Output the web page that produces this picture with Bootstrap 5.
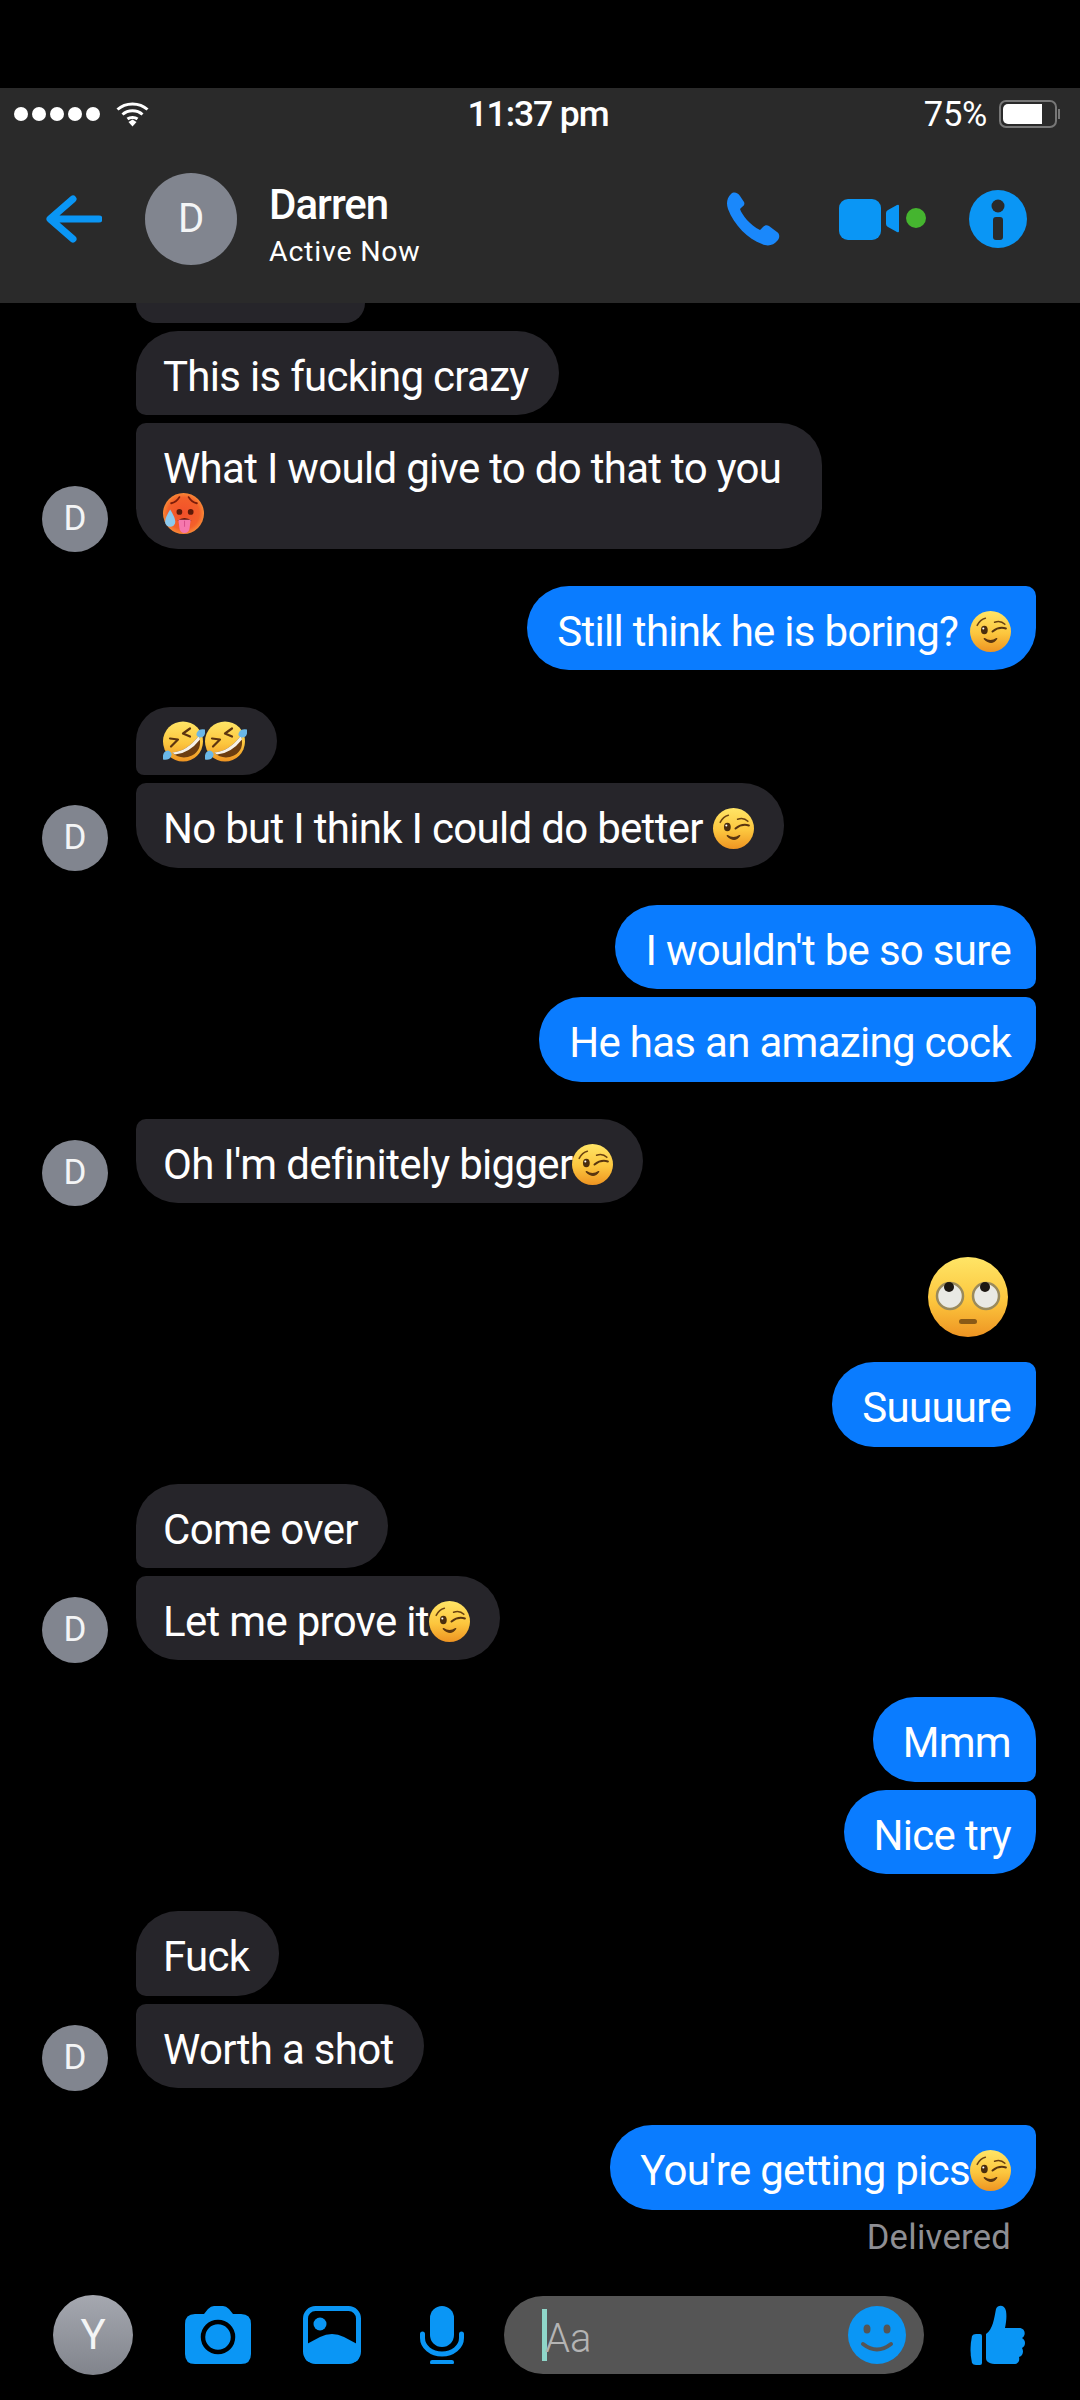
<!doctype html>
<html lang="en"><head><meta charset="utf-8"><title>Darren</title>
<link href="https://cdn.jsdelivr.net/npm/bootstrap@5.3.0/dist/css/bootstrap.min.css" rel="stylesheet">
<style>
html,body{background:#000;margin:0}
.screen{width:1080px;height:2400px;background:#000;color:#fff;font-family:Roboto,"Liberation Sans",sans-serif;overflow:hidden}
.topgap{height:88px}
.appbar{height:215px;background:#2a2a2a;flex:none}
.statusline{height:52px;padding:0 20px 0 14px;font-size:35px;line-height:52px}
.stat-l,.stat-r{width:360px}
.sig{width:14px;height:14px;background:#fff;border-radius:50%}
.sigs{gap:4px}
.clock{font-weight:500;font-size:35.5px;letter-spacing:-1.100px;margin-left:2px}
.pct{font-size:34.5px;letter-spacing:-.3px}
.batt{width:61px;height:28px;margin-left:12px}
.navline{height:157px;padding-left:46px}
.ava{background:#81858f;color:#f4f5f6;flex:none}
.ava-lg{width:92px;height:92px;font-size:40px;margin-left:43px}
.who{margin-left:32px;padding-top:14px}
.who-name{font-size:42px;font-weight:500;line-height:46px;letter-spacing:-1px}
.who-state{font-size:28.5px;line-height:36px;letter-spacing:.8px;margin-top:6px}
.acts{margin-left:auto}
.feed{min-height:0;overflow:hidden}
.stub{width:229px;height:20px;margin-left:136px;background:#26252a;border-radius:0 0 42px 42px;margin-bottom:8px}
.grp{margin-top:37.1px}
.grp-in{padding-left:136px;position:relative}
.grp-out{padding-right:44px}
.stack{gap:8px}
.bub{font-size:42px;line-height:41px;padding:25px 30px 18.4px 27px;border-radius:42px;width:fit-content;max-width:700px;letter-spacing:-.7px}
.bub-in{background:#26252a}
.bub-out{background:#0a7cff;padding:25px 25px 18.4px 30px}
.bub-in.top{border-bottom-left-radius:10px}
.bub-in.end{border-top-left-radius:10px}
.bub-out.top{border-bottom-right-radius:10px}
.bub-out.end{border-top-right-radius:10px}
.bub-wrapped{padding-right:41px}
.bub-emo{padding-top:13.5px;padding-bottom:13.5px}
.grp-first{margin-top:0}
.ava-sm{width:66px;height:66px;font-size:35px;position:absolute;left:42px;bottom:-3px}
.emo{width:41px;height:41px;vertical-align:0;margin:-6px 0}
.emo-wide{width:42px}
.emo-low{vertical-align:-4px}
.word-gap{margin-left:2px}
.emo-big{width:80px;height:80px;display:block;margin:0 28px 25px auto}
.rolled{margin-top:54px}
.status-note{font-size:34.5px;line-height:40px;color:#8e8e93;padding-right:25px;margin-top:7px;letter-spacing:.3px}
.composer{height:107px;flex:none;padding-left:53px;padding-bottom:24px}
.ava-me{width:80px;height:80px;font-size:42px;background:linear-gradient(#a5a8b0,#81848c)}
.ic-cam{margin-left:52px}.ic-gal{margin-left:52px}.ic-mic{margin-left:59px}
.entry{width:420px;height:78px;background:#555;margin-left:40px;padding:0 18px 0 38px}
.caret-bar{width:5px;height:52px;background:#8fd6c9;margin-right:-2px}
.hint{font-size:40px;color:#b4b4b4;font-weight:300;padding-top:9px}
.ic-smile{margin-left:auto}
.ic-like{margin-left:45px}
.ic-video{margin-left:59px}
.ic-info{margin:0 53px 0 43px}
svg{display:block;flex:none}
svg.emo{display:inline-block}
.defs{width:0;height:0;display:block}
</style></head><body>
<svg class="defs" aria-hidden="true"><defs>
<linearGradient id="y" x1="0" y1="0" x2="0" y2="1"><stop offset="0" stop-color="#ffe566"/><stop offset=".55" stop-color="#fcc63e"/><stop offset="1" stop-color="#ee9422"/></linearGradient>
<radialGradient id="h" cx=".5" cy=".5" r=".55"><stop offset="0" stop-color="#f2502a"/><stop offset=".7" stop-color="#f3602a"/><stop offset="1" stop-color="#fb9a3c"/></radialGradient>
<symbol id="wink" viewBox="0 0 40 40"><circle cx="20" cy="20" r="20" fill="url(#y)"/><path d="M7 14q3-6 8-7M24 11q6-2 10 2" fill="none" stroke="#6b4210" stroke-width="1.500" stroke-linecap="round"/><ellipse cx="14" cy="18.500" rx="3.300" ry="4.200" fill="#4a2e0e"/><circle cx="13" cy="17" r="1" fill="#fff"/><path d="M22 20q6-5 13-3" fill="none" stroke="#5a3610" stroke-width="2" stroke-linecap="round"/><path d="M14 27q6 4 12 0q-5 7-12 0z" fill="#5a3610" stroke="#5a3610" stroke-width="1.400" stroke-linejoin="round"/></symbol>
<symbol id="hot" viewBox="0 0 40 40"><circle cx="20" cy="20" r="20" fill="url(#h)"/><path d="M8 10q5-1 8-6M25 4q3 5 8 6" fill="none" stroke="#7a1d0a" stroke-width="1.800" stroke-linecap="round"/><circle cx="16" cy="18.500" r="2.800" fill="#5d1a08"/><circle cx="27" cy="18.500" r="2.800" fill="#5d1a08"/><path d="M14 27q7-5 14 0z" fill="#5d1a08"/><path d="M15 26h12l-1 8a5 5 0 0 1-10 0z" fill="#f678ae"/><path d="M21 27v6" stroke="#d94f8c" stroke-width="1"/><path d="M7 16q-5 8-5 12a5 5 0 0 0 10 0q0-4-5-12z" fill="#8cc9ee"/></symbol>
<symbol id="rofl" viewBox="0 0 42 40"><circle cx="20" cy="20" r="20" fill="url(#y)"/><path d="M9 31Q24 30 36 14Q40 28 29 34Q18 39 9 31z" fill="#6b3d10"/><path d="M9 31Q24 30 36 14L37 18Q26 32 12 33z" fill="#f5f1e8"/><path d="M7 17l8 1l-7 7M27 7l-7 5l7 3" fill="none" stroke="#5c3410" stroke-width="2.200" stroke-linecap="round" stroke-linejoin="round"/><path d="M42 8q-6-1-8 3t3 5q6 0 5-8zM0 38q6 1 8-3t-3-6q-6 1-5 9z" fill="#6ab8e8"/></symbol>
<symbol id="roll" viewBox="0 0 80 80"><circle cx="40" cy="40" r="40" fill="url(#y)"/><circle cx="22" cy="39" r="13" fill="#e9e9e4" stroke="#9a8a5c" stroke-width="2.500"/><circle cx="58" cy="39" r="13" fill="#e9e9e4" stroke="#9a8a5c" stroke-width="2.500"/><circle cx="21" cy="30" r="5" fill="#1c1712"/><circle cx="57" cy="30" r="5" fill="#1c1712"/><rect x="31" y="62" width="18" height="5" rx="2.500" fill="#8a5a16"/></symbol>
</defs></svg>
<div class="screen d-flex flex-column">
<div class="topgap"></div>
<header class="appbar">
 <div class="statusline d-flex align-items-center justify-content-between">
  <div class="stat-l d-flex align-items-center"><div class="sigs d-flex"><i class="sig"></i><i class="sig"></i><i class="sig"></i><i class="sig"></i><i class="sig"></i></div>
   <svg class="ms-3" width="33" height="26" viewBox="0 0 33 26" fill="none" stroke="#fff" stroke-width="3"><path d="M1.500 8.500c8-7.500 22-7.500 30 0M6.500 13.500c5.500-5 14.500-5 20 0M11.500 18c2.500-2 7.500-2 10 0"/><path d="M12.500 21l4-2.500l4 2.500l-4 4.500z" fill="#fff" stroke="none"/></svg></div>
  <div class="clock">11:37 pm</div>
  <div class="stat-r d-flex align-items-center justify-content-end"><span class="pct">75%</span>
   <svg class="batt" viewBox="0 0 61 28"><rect x="1" y="1" width="56" height="26" rx="6" fill="none" stroke="#777" stroke-width="2"/><path d="M4 9a5 5 0 0 1 5-5h34v20H9a5 5 0 0 1-5-5z" fill="#fff"/><rect x="59" y="9" width="2" height="10" fill="#777"/></svg></div>
 </div>
 <div class="navline d-flex align-items-center">
  <svg width="56" height="48" viewBox="0 0 56 48" fill="none" stroke="#0a96f5" stroke-width="7" stroke-linecap="round" stroke-linejoin="round"><path d="M53 24H5M27 4L4 24l23 20"/></svg>
  <div class="ava ava-lg rounded-circle d-flex align-items-center justify-content-center">D</div>
  <div class="who"><div class="who-name">Darren</div><div class="who-state">Active Now</div></div>
  <div class="acts d-flex align-items-center">
   <svg width="54" height="54" viewBox="0 0 54 54"><path d="M5 2C8-1 12 1 14 4L18 10C19 12 18 14 16 15L14 17C16 23 24 33 34 38L37 35C39 33 41 33 43 34L51 40C54 42 54 46 51 49C48 53 42 55 36 52C22 47 8 33 2 17C0 11 1 6 5 2Z" fill="#1a88fb"/></svg>
   <svg class="ic-video" width="87" height="42" viewBox="0 0 87 42"><rect y="1" width="42" height="41" rx="9" fill="#0a96f5"/><path d="M47 15q0-2 2-3l9-5q2-1 2 1v25q0 2-2 1l-9-5q-2-1-2-3z" fill="#0a96f5"/><circle cx="77" cy="20" r="10" fill="#45b52f"/></svg>
   <svg class="ic-info" width="58" height="58" viewBox="0 0 58 58"><circle cx="29" cy="29" r="29" fill="#0a96f5"/><circle cx="29" cy="16" r="6.500" fill="#2a2a2a"/><rect x="24" y="27" width="10" height="23" rx="3" fill="#2a2a2a"/></svg>
  </div>
 </div>
</header>
<main class="feed flex-grow-1 d-flex flex-column">
 <div class="stub"></div>
 <section class="grp-in grp-first">
  <div class="stack d-flex flex-column">
   <div class="bub bub-in top">This is fucking crazy</div>
   <div class="bub bub-in end bub-wrapped">What I would give to do that to you<br><svg class="emo emo-low"><use href="#hot"/></svg></div>
  </div><div class="ava ava-sm rounded-circle d-flex align-items-center justify-content-center">D</div>
 </section>
 <section class="grp grp-out d-flex flex-column align-items-end stack"><div class="bub bub-out end">Still think he is boring? <svg class="emo word-gap"><use href="#wink"/></svg></div></section>
 <section class="grp grp-in">
  <div class="stack d-flex flex-column">
   <div class="bub bub-in top bub-emo"><svg class="emo emo-wide"><use href="#rofl"/></svg><svg class="emo emo-wide"><use href="#rofl"/></svg></div>
   <div class="bub bub-in end">No but I think I could do better <svg class="emo"><use href="#wink"/></svg></div>
  </div><div class="ava ava-sm rounded-circle d-flex align-items-center justify-content-center">D</div>
 </section>
 <section class="grp grp-out d-flex flex-column align-items-end stack"><div class="bub bub-out top">I wouldn't be so sure</div><div class="bub bub-out end">He has an amazing cock</div></section>
 <section class="grp grp-in"><div class="bub bub-in end">Oh I'm definitely bigger<svg class="emo"><use href="#wink"/></svg></div><div class="ava ava-sm rounded-circle d-flex align-items-center justify-content-center">D</div></section>
 <section class="rolled grp-out d-flex flex-column align-items-end"><svg class="emo-big"><use href="#roll"/></svg><div class="bub bub-out end">Suuuure</div></section>
 <section class="grp grp-in">
  <div class="stack d-flex flex-column"><div class="bub bub-in top">Come over</div><div class="bub bub-in end">Let me prove it<svg class="emo"><use href="#wink"/></svg></div></div>
  <div class="ava ava-sm rounded-circle d-flex align-items-center justify-content-center">D</div>
 </section>
 <section class="grp grp-out d-flex flex-column align-items-end stack"><div class="bub bub-out top">Mmm</div><div class="bub bub-out end">Nice try</div></section>
 <section class="grp grp-in">
  <div class="stack d-flex flex-column"><div class="bub bub-in top">Fuck</div><div class="bub bub-in end">Worth a shot</div></div>
  <div class="ava ava-sm rounded-circle d-flex align-items-center justify-content-center">D</div>
 </section>
 <section class="grp grp-out d-flex flex-column align-items-end"><div class="bub bub-out end">You're getting pics<svg class="emo"><use href="#wink"/></svg></div><div class="status-note">Delivered</div></section>
</main>
<footer class="composer d-flex align-items-center">
 <div class="ava ava-me rounded-circle d-flex align-items-center justify-content-center">Y</div>
 <svg class="ic-cam" width="66" height="58" viewBox="0 0 66 58"><path d="M10 8h9l4-5q3-3 6-3h9q3 0 6 3l4 5h8q10 0 10 10v30q0 10-10 10H10Q0 58 0 48V18Q0 8 10 8z" fill="#0a96f5"/><circle cx="33" cy="31" r="15" fill="#0a96f5" stroke="#000" stroke-width="4.500"/></svg>
 <svg class="ic-gal" width="58" height="58" viewBox="0 0 58 58"><rect x="2.500" y="2.500" width="53" height="53" rx="10" fill="none" stroke="#0a96f5" stroke-width="5"/><circle cx="17" cy="18" r="6.500" fill="#0a96f5"/><path d="M2 39l15-8q12-6 24 0l15 8v11q0 6-6 6H8q-6 0-6-6z" fill="#0a96f5"/></svg>
 <svg class="ic-mic" width="44" height="58" viewBox="0 0 44 58"><rect x="10" width="24" height="41" rx="12" fill="#0a96f5"/><path d="M2.500 28v4a19.500 16 0 0 0 39 0v-4" fill="none" stroke="#0a96f5" stroke-width="5" stroke-linecap="round"/><rect x="10" y="54" width="24" height="4.500" rx="2.200" fill="#0a96f5"/></svg>
 <div class="entry rounded-pill d-flex align-items-center"><span class="caret-bar"></span><span class="hint">Aa</span>
  <svg class="ic-smile" width="58" height="58" viewBox="0 0 58 58"><circle cx="29" cy="29" r="29" fill="#0a96f5"/><ellipse cx="19" cy="23" rx="3.500" ry="4.500" fill="#555"/><ellipse cx="39" cy="23" rx="3.500" ry="4.500" fill="#555"/><path d="M15 38q14 11 28 0" fill="none" stroke="#555" stroke-width="4" stroke-linecap="round"/></svg></div>
 <svg class="ic-like" width="58" height="60" viewBox="0 0 58 60"><path d="M3 31q1-2 4-2h4q2 0 2 2v27q0 2-2 2H7q-3 0-4-2q-3-13 0-27z" fill="#0a96f5"/><path d="M17 29C24 24 25 14 27 4C29-1 36 0 37 6C38 12 37 18 36 23L50 23C57 23 57 31 53 33C57 35 57 41 53 43C55 46 54 51 50 52C51 56 49 59 45 59L28 59C21 59 17 57 17 53Z" fill="#0a96f5"/></svg>
</footer>
</div>
</body></html>
